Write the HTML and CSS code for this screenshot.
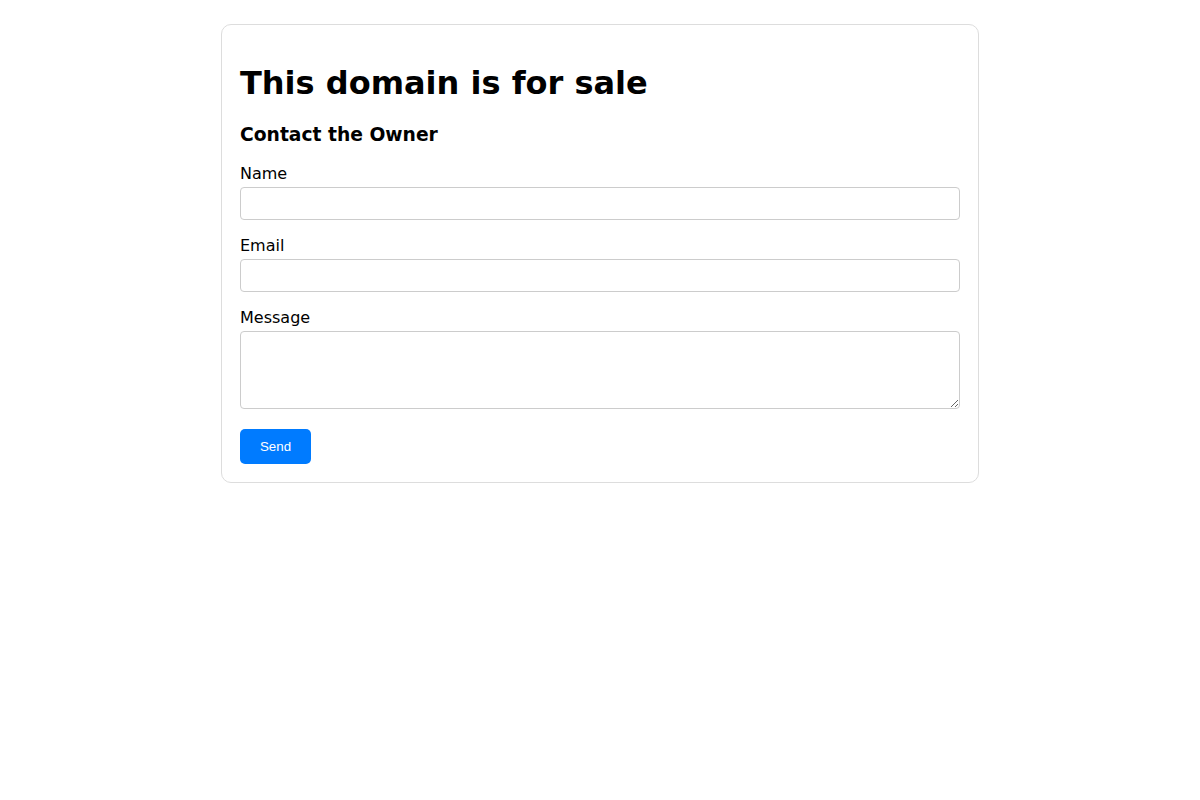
FILE: index.html
```html
<!DOCTYPE html>
<html lang="en">
<head>
<meta charset="utf-8">
<title>This domain is for sale</title>
<link rel="stylesheet" href="styles.css">
</head>
<body>
<div class="card">
  <h1 class="title">This domain is for sale</h1>
  <h3 class="subtitle">Contact the Owner</h3>
  <form class="form">
    <div class="field">
      <label class="label" for="name">Name</label>
      <input class="input" id="name" type="text">
    </div>
    <div class="field">
      <label class="label" for="email">Email</label>
      <input class="input" id="email" type="email">
    </div>
    <div class="field">
      <label class="label" for="message">Message</label>
      <textarea class="input textarea" id="message"></textarea>
    </div>
    <div class="actions">
      <button class="btn" type="button">Send</button>
    </div>
  </form>
</div>
</body>
</html>
```

FILE: styles.css
```css
html, body {
  margin: 0;
  padding: 0;
  background: #fff;
}
body {
  font-family: "DejaVu Sans", sans-serif;
  color: #000;
  padding-top: 24px;
}
.card {
  width: 720px;
  margin: 0 auto;
  padding: 18px;
  border: 1px solid #ddd;
  border-radius: 10px;
}
.title {
  font-size: 32px;
  font-weight: bold;
  margin: 21.44px 0;
  line-height: normal;
}
.subtitle {
  font-size: 18.72px;
  font-weight: bold;
  margin: 18.72px 0;
  line-height: normal;
}
.form {
  display: flex;
  flex-direction: column;
  gap: 16px;
}
.field {
  display: flex;
  flex-direction: column;
}
.label {
  font-size: 16px;
  margin-bottom: 4px;
}
.input {
  box-sizing: border-box;
  width: 100%;
  height: 33px;
  border: 1px solid #ccc;
  border-radius: 4px;
  font-family: "DejaVu Sans", sans-serif;
  font-size: 16px;
  padding: 6px 8px;
  margin: 0;
  background: #fff;
}
.textarea {
  height: 78px;
  resize: vertical;
  display: block;
}
.actions {
  padding-top: 4px;
}
.btn {
  display: block;
  width: 71px;
  height: 35px;
  padding: 0;
  background: #007bff;
  color: #fff;
  border: none;
  border-radius: 5px;
  font-family: "Liberation Sans", Arial, sans-serif;
  font-size: 13.333px;
}
```
